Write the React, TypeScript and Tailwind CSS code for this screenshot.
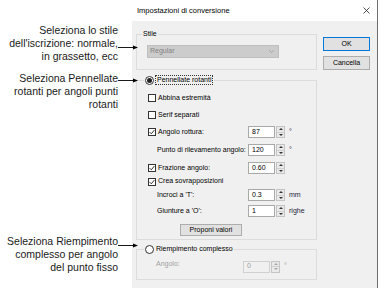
import React from "react";

const ui = "font-['Liberation_Sans',Arial,sans-serif]";

function Callout({ lines, arrowTop, className }: { lines: string[]; arrowTop: number; className: string }) {
  return (
    <div className={`relative text-right text-[10.5px] leading-[13px] text-[#1a1a1a] ${className}`}>
      {lines.map((l) => (
        <div key={l}>{l}</div>
      ))}
      <svg
        className="absolute left-[118px] z-10"
        style={{ top: arrowTop }}
        width="21"
        height="5"
        viewBox="0 0 21 5"
      >
        <line x1="0" y1="2.5" x2="17" y2="2.5" stroke="#000" strokeWidth="0.9" />
        <path d="M15 0.5 L20 2.5 L15 4.5 Z" fill="#000" />
      </svg>
    </div>
  );
}

function Check({ on }: { on?: boolean }) {
  return (
    <div className="flex h-[8px] w-[8px] shrink-0 items-center justify-center border border-[#333] bg-white">
      {on && (
        <svg width="6" height="6" viewBox="0 0 6 6">
          <path d="M0.6 3.1 L2.3 4.8 L5.4 1" fill="none" stroke="#222" strokeWidth="0.9" />
        </svg>
      )}
    </div>
  );
}

function Spin({ disabled }: { disabled?: boolean }) {
  const c = disabled ? "#a8a8a8" : "#333";
  return (
    <div className="ml-[1px] flex h-[12px] w-[9px] flex-col border border-[#c4c4c4] bg-[#e9e9e9]">
      <div className="flex flex-1 items-center justify-center border-b border-[#cfcfcf]">
        <svg width="4" height="2" viewBox="0 0 4 2">
          <path d="M0 2 L2 0 L4 2 Z" fill={c} />
        </svg>
      </div>
      <div className="flex flex-1 items-center justify-center">
        <svg width="4" height="2" viewBox="0 0 4 2">
          <path d="M0 0 L2 2 L4 0 Z" fill={c} />
        </svg>
      </div>
    </div>
  );
}

function NumField({ value, unit, disabled }: { value: string; unit?: string; disabled?: boolean }) {
  return (
    <div className="flex items-center">
      <div
        className={`flex h-[12px] w-[27px] items-center border pl-[3px] ${
          disabled ? "border-[#d0d0d0] bg-[#f0f0f0] text-[#a0a0a0]" : "border-[#a9a9a9] bg-white text-black"
        }`}
      >
        {value}
      </div>
      <Spin disabled={disabled} />
      {unit && <span className={`ml-[4px] ${disabled ? "text-[#a0a0a0]" : "text-[#1e1e3c]"}`}>{unit}</span>}
    </div>
  );
}

function Row({ h, children }: { h: number; children: React.ReactNode }) {
  return (
    <div className="flex items-center" style={{ height: h }}>
      {children}
    </div>
  );
}

export default function App() {
  return (
    <div className={`flex h-[302px] w-[389px] bg-white ${ui}`}>
      {/* annotations */}
      <div className="flex w-[132px] shrink-0 flex-col pr-[14px]">
        <Callout
          className="mt-[24px]"
          lines={["Seleziona lo stile", "dell'iscrizione: normale,", "in grassetto, ecc"]}
          arrowTop={21}
        />
        <Callout
          className="mt-[9px]"
          lines={["Seleziona Pennellate", "rotanti per angoli punti", "rotanti"]}
          arrowTop={6}
        />
        <Callout
          className="mt-[124px]"
          lines={["Seleziona Riempimento", "complesso per angolo", "del punto fisso"]}
          arrowTop={8}
        />
      </div>

      {/* dialog */}
      <div className="flex h-[288px] w-[246px] flex-col border-r border-[#6e6e6e] bg-[#f0f0f0] text-[7px] text-black">
        <div className="flex h-[21px] items-center justify-between bg-white pl-[5px] pr-[7px]">
          <span className="text-[7.5px]">Impostazioni di conversione</span>
          <svg width="7" height="7" viewBox="0 0 7 7">
            <path d="M0.5 0.5 L6.5 6.5 M6.5 0.5 L0.5 6.5" stroke="#222" strokeWidth="0.8" />
          </svg>
        </div>

        <div className="flex pl-[4px] pt-[8px]">
          <div className="flex w-[181px] flex-col">
            {/* Stile */}
            <fieldset className="border border-[#dcdcdc] pb-[11px]">
              <legend className="ml-[5px] px-[1px] leading-[10px]">Stile</legend>
              <div className="ml-[10px] mt-[6px] flex h-[13px] w-[132px] items-center justify-between border border-[#bfbfbf] bg-[#cccccc] pl-[2px] pr-[4px] text-[#838383]">
                <span>Regular</span>
                <svg width="5" height="3" viewBox="0 0 5 3">
                  <path d="M0.3 0.3 L2.5 2.5 L4.7 0.3" fill="none" stroke="#8a8a8a" strokeWidth="0.6" />
                </svg>
              </div>
            </fieldset>

            {/* Pennellate rotanti */}
            <fieldset className="mt-[5px] border border-[#dcdcdc] pb-[3px]">
              <legend className="ml-[7px] flex items-center px-[1px] leading-[10px]">
                <span className="flex h-[9px] w-[9px] items-center justify-center rounded-full border border-[#333] bg-white">
                  <span className="h-[5px] w-[5px] rounded-full bg-[#222]" />
                </span>
                <span className="ml-[1px] border border-dotted border-[#333] px-[1px] leading-[8px]">Pennellate rotanti</span>
              </legend>
              <div className="mt-[5px] flex flex-col">
                <Row h={16}>
                  <div className="ml-[11px] flex items-center gap-[2px]">
                    <Check />
                    <span>Abbina estremità</span>
                  </div>
                </Row>
                <Row h={18}>
                  <div className="ml-[11px] flex items-center gap-[2px]">
                    <Check />
                    <span>Serif separati</span>
                  </div>
                </Row>
                <Row h={16}>
                  <div className="ml-[11px] flex w-[100px] items-center gap-[2px]">
                    <Check on />
                    <span>Angolo rottura:</span>
                  </div>
                  <NumField value="87" unit="°" />
                </Row>
                <Row h={20}>
                  <div className="w-[111px] pl-[20px]">Punto di rilevamento angolo:</div>
                  <NumField value="120" unit="°" />
                </Row>
                <Row h={16}>
                  <div className="ml-[11px] flex w-[100px] items-center gap-[2px]">
                    <Check on />
                    <span>Frazione angolo:</span>
                  </div>
                  <NumField value="0.60" />
                </Row>
                <Row h={11}>
                  <div className="ml-[11px] flex items-center gap-[2px]">
                    <Check on />
                    <span>Crea sovrapposizioni</span>
                  </div>
                </Row>
                <Row h={16}>
                  <div className="w-[111px] pl-[20px]">Incroci a 'T':</div>
                  <NumField value="0.3" unit="mm" />
                </Row>
                <Row h={16}>
                  <div className="w-[111px] pl-[20px]">Giunture a 'O':</div>
                  <NumField value="1" unit="righe" />
                </Row>
                <div className="ml-[43px] mt-[5px] flex h-[12px] w-[62px] items-center justify-center border border-[#adadad] bg-[#e1e1e1]">
                  Proponi valori
                </div>
              </div>
            </fieldset>

            {/* Riempimento complesso */}
            <fieldset className="mt-[4px] border border-[#dcdcdc] pb-[6px]">
              <legend className="ml-[7px] flex items-center px-[1px] leading-[10px]">
                <span className="h-[9px] w-[9px] rounded-full border border-[#333] bg-white" />
                <span className="ml-[2px]">Riempimento complesso</span>
              </legend>
              <div className="mt-[6px] flex h-[13px] items-center">
                <div className="w-[106px] pl-[19px] pb-[4px] text-[#a0a0a0]">Angolo:</div>
                <NumField value="0" unit="°" disabled />
              </div>
            </fieldset>
          </div>

          <div className="ml-[6px] flex w-[47px] flex-col gap-[5px] pt-[8px]">
            <div className="flex h-[14px] items-center justify-center border border-[#0078d7] bg-[#e1e1e1]">OK</div>
            <div className="flex h-[14px] items-center justify-center border border-[#adadad] bg-[#e1e1e1]">Cancella</div>
          </div>
        </div>
      </div>
    </div>
  );
}
